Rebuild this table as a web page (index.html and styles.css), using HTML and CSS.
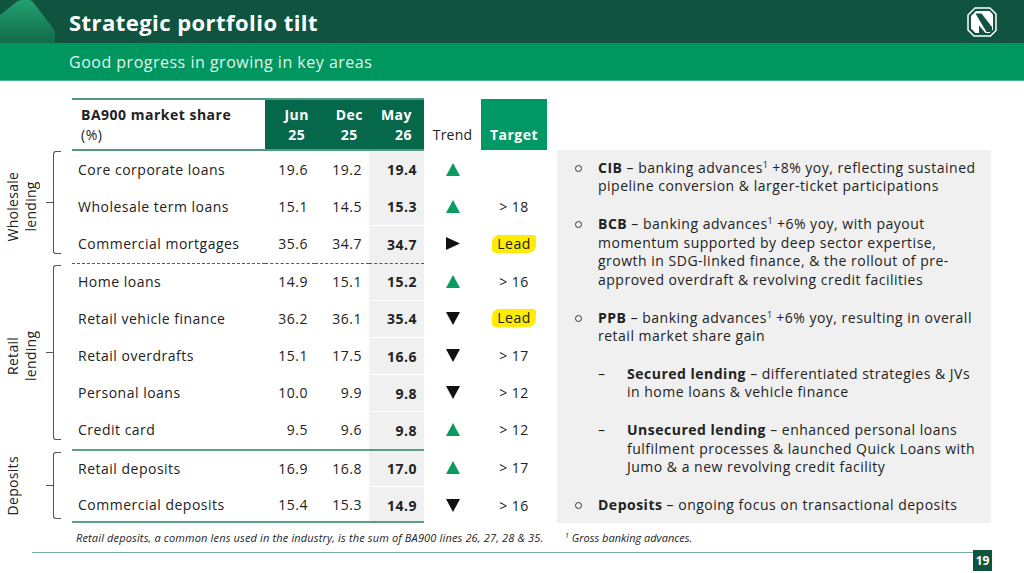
FILE: index.html
```html
<!DOCTYPE html>
<html lang="en">
<head>
<meta charset="utf-8">
<title>Strategic portfolio tilt</title>
<link rel="stylesheet" href="styles.css">
</head>
<body>
<header class="top">
  <svg class="corner" viewBox="0 0 56 43" aria-hidden="true">
    <defs>
      <linearGradient id="cg" x1="0" y1="0" x2="0" y2="1">
        <stop offset="0" stop-color="#22a270"/>
        <stop offset="1" stop-color="#12694b"/>
      </linearGradient>
    </defs>
    <path d="M0 15 L17 1.5 Q19 0 22 0 L29 0 Q31 0 33 2 L53 28 Q55 31 55 34 L55 43 L0 43 Z" fill="url(#cg)"/>
  </svg>
  <h1 class="title">Strategic portfolio tilt</h1>
  <svg class="logo" viewBox="0 0 30 30" aria-hidden="true">
    <path d="M8 1 H23 L29 7 V23.5 L23.5 29 H7 L1 23 V8 Z" fill="#10543f" stroke="#fff" stroke-width="1.5" stroke-linejoin="round"/>
    <path d="M4 9 L9 4 H22.5 L26 7.5 V22.5 L22.5 26 H8.5 L4 21.5 Z" fill="#fff"/>
    <polygon points="8.5,6.5 14.5,6.5 25,20 25,23.5 23.5,25 19.5,25" fill="#10543f"/>
    <polygon points="12,26 12,18.5 18.5,26" fill="#10543f"/>
  </svg>
</header>
<div class="sub">Good progress in growing in key areas</div>

<main class="content">
  <section class="left">
    <div class="tablewrap">
      <div class="groups">
        <div class="group g-w">
          <div class="glabel">Wholesale<br>lending</div>
          <div class="brace"></div>
        </div>
        <div class="group g-r">
          <div class="glabel">Retail<br>lending</div>
          <div class="brace"></div>
        </div>
        <div class="group g-d">
          <div class="glabel">Deposits</div>
          <div class="brace"></div>
        </div>
      </div>

      <div class="grid">
        <div class="c h h-lbl"><div><b>BA900 market share</b><br>(%)</div></div>
        <div class="c h h-dk"><div class="hv">Jun<br>25</div></div>
        <div class="c h h-dk"><div class="hv">Dec<br>25</div></div>
        <div class="c h h-dk h-may"><div class="hv hv-r">May<br>26</div></div>
        <div class="c h-trend">Trend</div>
        <div class="c h-tgt">Target</div>

        <div class="c lbl">Core corporate loans</div>
        <div class="c num">19.6</div>
        <div class="c num">19.2</div>
        <div class="c num may first">19.4</div>
        <div class="c trend"><svg class="tri up" viewBox="0 0 14 13"><polygon points="7,0 14,13 0,13"/></svg></div>
        <div class="c tgt"></div>

        <div class="c lbl">Wholesale term loans</div>
        <div class="c num">15.1</div>
        <div class="c num">14.5</div>
        <div class="c num may first">15.3</div>
        <div class="c trend"><svg class="tri up" viewBox="0 0 14 13"><polygon points="7,0 14,13 0,13"/></svg></div>
        <div class="c tgt">&gt; 18</div>

        <div class="c lbl">Commercial mortgages</div>
        <div class="c num">35.6</div>
        <div class="c num">34.7</div>
        <div class="c num may">34.7</div>
        <div class="c trend"><svg class="tri flat" viewBox="0 0 14 13"><polygon points="0,0 14,6.5 0,13"/></svg></div>
        <div class="c tgt"><span class="lead">Lead</span></div>

        <div class="c lbl dash">Home loans</div>
        <div class="c num dash">14.9</div>
        <div class="c num dash">15.1</div>
        <div class="c num may dash">15.2</div>
        <div class="c trend"><svg class="tri up" viewBox="0 0 14 13"><polygon points="7,0 14,13 0,13"/></svg></div>
        <div class="c tgt">&gt; 16</div>

        <div class="c lbl">Retail vehicle finance</div>
        <div class="c num">36.2</div>
        <div class="c num">36.1</div>
        <div class="c num may">35.4</div>
        <div class="c trend"><svg class="tri down" viewBox="0 0 14 13"><polygon points="0,0 14,0 7,13"/></svg></div>
        <div class="c tgt"><span class="lead">Lead</span></div>

        <div class="c lbl">Retail overdrafts</div>
        <div class="c num">15.1</div>
        <div class="c num">17.5</div>
        <div class="c num may">16.6</div>
        <div class="c trend"><svg class="tri down" viewBox="0 0 14 13"><polygon points="0,0 14,0 7,13"/></svg></div>
        <div class="c tgt">&gt; 17</div>

        <div class="c lbl">Personal loans</div>
        <div class="c num">10.0</div>
        <div class="c num">9.9</div>
        <div class="c num may">9.8</div>
        <div class="c trend"><svg class="tri down" viewBox="0 0 14 13"><polygon points="0,0 14,0 7,13"/></svg></div>
        <div class="c tgt">&gt; 12</div>

        <div class="c lbl">Credit card</div>
        <div class="c num">9.5</div>
        <div class="c num">9.6</div>
        <div class="c num may">9.8</div>
        <div class="c trend"><svg class="tri up" viewBox="0 0 14 13"><polygon points="7,0 14,13 0,13"/></svg></div>
        <div class="c tgt">&gt; 12</div>

        <div class="c lbl solid">Retail deposits</div>
        <div class="c num solid">16.9</div>
        <div class="c num solid">16.8</div>
        <div class="c num may solid">17.0</div>
        <div class="c trend"><svg class="tri up" viewBox="0 0 14 13"><polygon points="7,0 14,13 0,13"/></svg></div>
        <div class="c tgt">&gt; 17</div>

        <div class="c lbl last">Commercial deposits</div>
        <div class="c num last">15.4</div>
        <div class="c num last">15.3</div>
        <div class="c num may last">14.9</div>
        <div class="c trend lastrow"><svg class="tri down" viewBox="0 0 14 13"><polygon points="0,0 14,0 7,13"/></svg></div>
        <div class="c tgt lastrow">&gt; 16</div>
      </div>
    </div>
    <p class="note note-l">Retail deposits, a common lens used in the industry, is the sum of BA900 lines 26, 27, 28 &amp; 35.</p>
  </section>

  <section class="right">
    <div class="panel">
      <ul class="bullets">
        <li class="item"><span class="dot"></span><div><b>CIB</b> – banking advances<sup>1</sup> +8% yoy, reflecting sustained<br>pipeline conversion &amp; larger-ticket participations</div></li>
        <li class="item"><span class="dot"></span><div><b>BCB</b> – banking advances<sup>1</sup> +6% yoy, with payout<br>momentum supported by deep sector expertise,<br>growth in SDG-linked finance, &amp; the rollout of pre-<br>approved overdraft &amp; revolving credit facilities</div></li>
        <li class="item"><span class="dot"></span><div><b>PPB</b> – banking advances<sup>1</sup> +6% yoy, resulting in overall<br>retail market share gain
          <ul class="subs">
            <li class="sitem"><span class="dsh">–</span><div><b>Secured lending</b> – differentiated strategies &amp; JVs<br>in home loans &amp; vehicle finance</div></li>
            <li class="sitem"><span class="dsh">–</span><div><b>Unsecured lending</b> – enhanced personal loans<br>fulfilment processes &amp; launched Quick Loans with<br>Jumo &amp; a new revolving credit facility</div></li>
          </ul>
        </div></li>
        <li class="item"><span class="dot"></span><div><b>Deposits</b> – ongoing focus on transactional deposits</div></li>
      </ul>
    </div>
    <p class="note note-r"><sup>1</sup> Gross banking advances.</p>
  </section>
</main>

<footer class="foot">
  <div class="pg">19</div>
</footer>
</body>
</html>
```

FILE: styles.css
```css
* { box-sizing: border-box; }

body {
  margin: 0;
  width: 1024px;
  height: 573px;
  overflow: hidden;
  background: #fff;
  color: #222;
  font-family: "Open Sans", "Liberation Sans", sans-serif;
  letter-spacing: 0.5px;
}

/* Header bars */
.top {
  height: 43px;
  background: #10543f;
  display: flex;
  align-items: center;
}
.corner {
  width: 56px;
  height: 43px;
  flex: none;
  align-self: flex-start;
}
.title {
  flex: 1;
  margin: 0 0 0 13px;
  font-size: 22px;
  font-weight: 700;
  color: #fff;
  letter-spacing: 0.45px;
}
.logo {
  width: 30px;
  height: 30px;
  flex: none;
  margin-right: 27px;
}
.sub {
  height: 38px;
  background: #00965f;
  border-bottom: 1px solid #4bb88d;
  padding-left: 69px;
  display: flex;
  align-items: center;
  font-size: 16px;
  color: #e2f3ea;
  letter-spacing: 0.5px;
}

/* Content */
.content {
  display: flex;
  height: 471px;
}
.left {
  width: 547px;
  flex: none;
  padding-top: 17px;
}
.tablewrap {
  display: flex;
}
.groups {
  width: 72px;
  flex: none;
  padding-top: 53px;
  display: flex;
  flex-direction: column;
}
.group {
  display: flex;
}
.g-w { height: 111.6px; }
.g-r { height: 186px; }
.g-d { height: 74.4px; }
.glabel {
  width: 36px;
  margin-left: 4px;
  writing-mode: vertical-rl;
  transform: rotate(180deg);
  text-align: center;
  font-size: 14px;
  line-height: 18px;
  letter-spacing: 0.3px;
}
.brace {
  position: relative;
  width: 8px;
  margin-left: 13px;
  border: 1px solid #555;
  border-right: 0;
  border-radius: 3px 0 0 3px;
}
.brace::before {
  content: "";
  position: absolute;
  left: -8px;
  top: 50%;
  width: 7px;
  border-top: 1px solid #555;
}
.g-w .brace { margin-top: 0; margin-bottom: 9px; }
.g-r .brace { margin-top: 2px; margin-bottom: 9px; }
.g-d .brace { margin-top: 3px; margin-bottom: 4px; }

/* Table grid */
.grid {
  display: grid;
  grid-template-columns: 193px 50px 54px 55px 57px 66px;
  grid-template-rows: 53px repeat(10, 37.2px);
  width: 475px;
  font-size: 14px;
}
.c {
  display: flex;
  align-items: center;
}
.h {
  border-top: 2px solid #4e9b80;
  border-bottom: 2px solid #4e9b80;
  align-items: flex-end;
  padding-bottom: 4px;
  line-height: 20px;
}
.h-lbl {
  padding-left: 9px;
}
.h-dk {
  background: #06684a;
  background-clip: padding-box;
  color: #fff;
  font-weight: 700;
  justify-content: flex-end;
  padding-right: 6px;
}
.h-may { padding-right: 12px; }
.hv { text-align: center; }
.hv-r { text-align: right; }
.h-trend {
  align-items: flex-end;
  justify-content: center;
  padding-bottom: 6px;
  line-height: 20px;
  letter-spacing: 0.2px;
}
.h-tgt {
  margin: 1px 0;
  background: #009966;
  color: #fff;
  font-weight: 700;
  align-items: flex-end;
  justify-content: center;
  padding-bottom: 5px;
  line-height: 20px;
}

.lbl { padding-left: 6px; }
.num {
  justify-content: flex-end;
  padding-right: 7px;
}
.may {
  background: #f0f0f0;
  font-weight: 700;
  border-top: 1px solid #fff;
}
.may.first { border-top: 0; }
.dash { border-top: 1px dashed #555; }
.may.dash { border-top: 1px dashed #555; }
.solid, .may.solid { border-top: 2px solid #5a9e86; }
.last {
  border-bottom: 2px solid #5a9e86;
  padding-top: 3px;
}
.lastrow { padding-top: 3px; }
.trend, .tgt { justify-content: center; }
.tri { width: 14px; height: 13px; }
.tri.up { fill: #0a9a62; }
.tri.down, .tri.flat { fill: #111; }
.lead {
  background: #ffec00;
  padding: 0 5px;
  line-height: 18px;
  border-radius: 7px 3px 8px 4px;
}

.note {
  margin: 0;
  font-size: 11px;
  font-style: italic;
  color: #222;
  line-height: 14px;
}
.note-l {
  margin: 8px 0 0 76px;
  letter-spacing: 0.15px;
  white-space: nowrap;
}
.note-r {
  margin: 8px 0 0 8px;
  letter-spacing: 0;
}
.note sup {
  font-size: 7px;
  line-height: 0;
  vertical-align: 4px;
}

/* Right panel */
.right {
  width: 434px;
  flex: none;
  margin-left: 10px;
  padding-top: 69px;
}
.panel {
  height: 373px;
  background: #f0f0f0;
  padding: 9px 0 0 18px;
}
.bullets, .subs {
  list-style: none;
  margin: 0;
  padding: 0;
}
.item {
  display: grid;
  grid-template-columns: 23px 1fr;
  font-size: 14px;
  line-height: 18.4px;
  margin-bottom: 19.6px;
  white-space: nowrap;
}
.dot {
  width: 7px;
  height: 7px;
  margin-top: 6px;
  border: 1.2px solid #333;
  border-radius: 50%;
}
.item sup {
  font-size: 9px;
  line-height: 0;
  vertical-align: 5px;
  letter-spacing: 0;
}
.subs { margin-top: 19.6px; }
.sitem {
  display: grid;
  grid-template-columns: 29px 1fr;
  margin-bottom: 19.6px;
}
.sitem:last-child { margin-bottom: 0; }

/* Footer */
.foot {
  margin: 0 32px;
  border-top: 1.5px solid #7aab98;
  display: flex;
  justify-content: flex-end;
}
.pg {
  width: 19px;
  height: 21px;
  margin-top: -3px;
  background: #10543f;
  color: #fff;
  font-weight: 700;
  font-size: 12px;
  letter-spacing: 0;
  display: flex;
  align-items: center;
  justify-content: center;
}
```
